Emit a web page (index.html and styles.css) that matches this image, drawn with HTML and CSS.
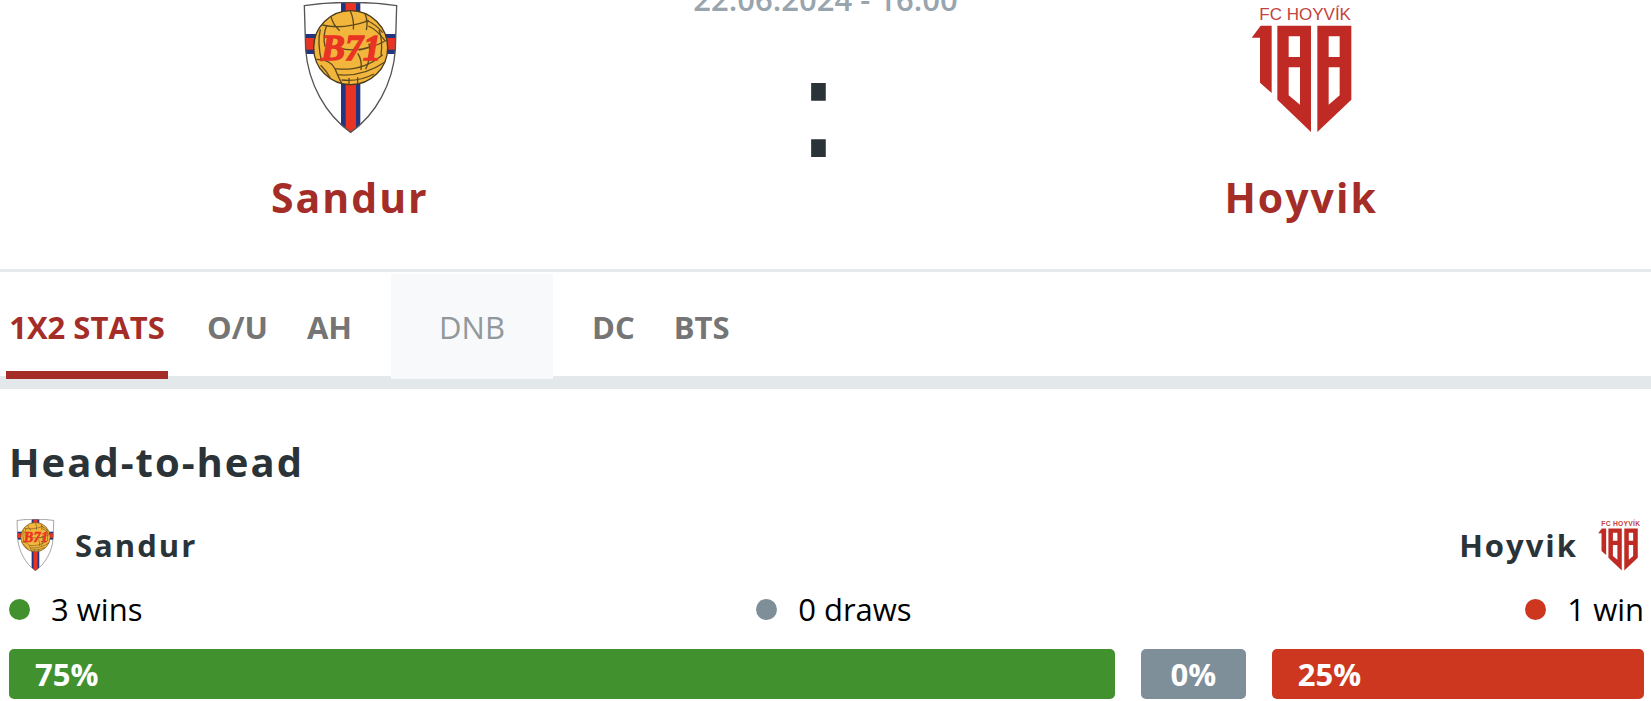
FILE: index.html
```html
<!DOCTYPE html>
<html lang="en">

<head>
  <title>Sandur - Hoyvik</title>
  <meta charset="UTF-8">
  <meta name="viewport" content="width=device-width, initial-scale=1.0">
  <link rel="stylesheet" href="styles.css">
</head>

<body>
  <svg class="sprite" aria-hidden="true">
    <symbol id="crest-sandur" viewBox="75 6 393 393">
      <clipPath id="shield">
        <path d="M136 17Q205 6 275 8Q345 6 413 17L409 150C402 250 350 345 275 397C200 345 148 250 140 150Z" />
      </clipPath>
      <g clip-path="url(#shield)">
        <rect x="130" y="0" width="290" height="400" fill="#fff" />
        <rect x="130" y="102" width="290" height="60" fill="#24357f" />
        <rect x="246" y="0" width="58" height="400" fill="#24357f" />
        <rect x="130" y="114" width="290" height="35" fill="#e93424" />
        <rect x="260" y="0" width="31" height="400" fill="#e93424" />
      </g>
      <path class="crest-edge" d="M136 17Q205 6 275 8Q345 6 413 17L409 150C402 250 350 345 275 397C200 345 148 250 140 150Z" />
      <circle cx="275" cy="143" r="111" fill="#f2b63c" stroke="#4a3a1c" stroke-width="4" />
      <g class="crest-seam">
        <path d="M216 50Q222 75 242 92M274 33Q286 60 283 88M318 42Q328 64 322 90M190 75Q250 90 330 62" />
        <path d="M320 60Q350 72 371 98M328 78Q352 88 378 122M184 88Q174 130 188 184M204 75Q190 105 198 140" />
        <path d="M172 178Q215 178 228 206Q235 225 248 250M185 196Q205 215 215 236M228 206Q310 216 371 164M235 224Q310 232 378 186M248 240Q300 246 345 222M270 234V254M296 232V252" />
        <path d="M300 150Q345 142 384 120M360 90Q372 120 366 165M240 142Q280 160 346 136M330 130Q338 170 320 208M296 160Q310 180 306 210" />
      </g>
      <text class="crest-b71" x="186" y="180">B71</text>
    </symbol>
    <symbol id="crest-hoyvik" viewBox="110 6 393 393">
      <text class="crest-fc" x="180" y="59">FC HOYVÍK</text>
      <g fill="#c02a24">
        <path d="M184 77H217V279L182 248V113H157Z" />
        <path fill-rule="evenodd" d="M234 77H335V396L234 299ZM268 109V171H302V109ZM268 202V286L302 314V202Z" />
        <path fill-rule="evenodd" d="M354 77H456V299L354 396ZM388 109V171H421V109ZM388 202V314L421 286V202Z" />
      </g>
    </symbol>
  </svg>

  <header class="match">
    <div class="team">
      <svg class="team-crest" role="img" aria-label="Sandur"><use href="#crest-sandur" /></svg>
      <a href="#" class="team-name">Sandur</a>
    </div>
    <div class="info">
      <time class="date" datetime="2024-06-22T16:00">22.06.2024 - 16:00</time>
      <span class="score">:</span>
    </div>
    <div class="team">
      <svg class="team-crest" role="img" aria-label="Hoyvik"><use href="#crest-hoyvik" /></svg>
      <a href="#" class="team-name">Hoyvik</a>
    </div>
  </header>

  <nav class="tabs">
    <button type="button" class="tab active">1X2 STATS</button>
    <button type="button" class="tab">O/U</button>
    <button type="button" class="tab">AH</button>
    <button type="button" class="tab" disabled>DNB</button>
    <button type="button" class="tab">DC</button>
    <button type="button" class="tab">BTS</button>
  </nav>

  <main class="h2h">
    <h2>Head-to-head</h2>
    <div class="sides">
      <div class="side">
        <svg class="side-crest" aria-hidden="true"><use href="#crest-sandur" /></svg>
        <span>Sandur</span>
      </div>
      <div class="side">
        <span>Hoyvik</span>
        <svg class="side-crest" aria-hidden="true"><use href="#crest-hoyvik" /></svg>
      </div>
    </div>
    <ul class="legend">
      <li class="home">3 wins</li>
      <li class="draw">0 draws</li>
      <li class="away">1 win</li>
    </ul>
    <div class="bars">
      <div class="bar home" style="width: 75%">75%</div>
      <div class="bar draw" style="width: 0%">0%</div>
      <div class="bar away" style="width: 25%">25%</div>
    </div>
  </main>
</body>

</html>
```
FILE: styles.css
```css
* {
  box-sizing: border-box;
}

body {
  margin: 0;
  background-color: #fff;
  color: #2a3338;
  font-family: "Open Sans", "Noto Sans", sans-serif;
  font-size: 31px;
}

.sprite {
  position: absolute;
  width: 0;
  height: 0;
}

.crest-edge {
  fill: none;
  stroke: #555;
  stroke-width: 4;
}

.crest-seam {
  fill: none;
  stroke: #5f4a1e;
  stroke-width: 4;
}

.crest-b71 {
  font-family: "Liberation Serif", serif;
  font-size: 108px;
  font-style: italic;
  font-weight: bold;
  fill: #e93424;
  stroke: #e93424;
  stroke-width: 4;
}

.crest-fc {
  font-family: "Liberation Sans", sans-serif;
  font-size: 51px;
  fill: #c4423d;
}

/* match header */

.match {
  display: grid;
  grid-template-columns: repeat(3, 1fr);
  align-items: start;
  padding: 0 112px 44px;
  border-bottom: 3px solid #e5eaed;
}

.team {
  display: flex;
  flex-direction: column;
  align-items: center;
  gap: 36px;
  padding-top: 2px;
}

.team-crest {
  width: 131px;
  height: 131px;
}

.team-name {
  color: #a52d28;
  font-size: 41px;
  font-weight: 700;
  line-height: 56px;
  letter-spacing: 2px;
  text-decoration: none;
}

.info {
  display: flex;
  flex-direction: column;
  align-items: center;
  margin-top: -21px;
}

.date {
  color: #98a5ae;
  font-weight: 600;
  line-height: 40px;
}

.score {
  margin-right: 14px;
  font-family: "DejaVu Sans", sans-serif;
  font-size: 142px;
  line-height: 178px;
}

/* tabs */

.tabs {
  display: flex;
  gap: 39px;
  height: 117px;
  padding: 2px 6px 0;
  border-bottom: 13px solid #e3e8ea;
}

.tab {
  margin: 0 0 -3px;
  padding: 8px 0 0;
  border: 0;
  border-bottom: 8px solid transparent;
  background: none;
  color: #757575;
  font: inherit;
  font-weight: 700;
  cursor: pointer;
}

.tab.active {
  min-width: 162px;
  border-bottom-color: #a52d28;
  color: #a52d28;
}

.tab:disabled {
  min-width: 162px;
  background-color: #f7f9fb;
  color: #92979b;
  font-weight: 500;
  cursor: default;
}

/* head to head */

.h2h {
  padding: 46px 7px 0 9px;
}

h2 {
  margin: 0 0 29px;
  font-size: 40px;
  font-weight: 700;
  line-height: 54px;
  letter-spacing: 2px;
}

.sides,
.legend,
.bars {
  display: flex;
  justify-content: space-between;
}

.side {
  display: flex;
  align-items: center;
  gap: 14px;
  font-weight: 700;
  line-height: 54px;
  letter-spacing: 2px;
}

.side-crest {
  width: 52px;
  height: 52px;
}

.legend {
  margin: 15px 0 18px;
  padding: 0;
  list-style: none;
  color: #000;
  line-height: 44px;
}

.legend li {
  display: flex;
  align-items: center;
  gap: 21px;
}

.legend li::before {
  content: "";
  width: 21px;
  height: 21px;
  border-radius: 50%;
  background-color: #41922f;
}

.legend li.draw::before {
  background-color: #7e8f9a;
}

.legend li.away::before {
  background-color: #cd371f;
}

.bars {
  gap: 26px;
}

.bar {
  padding: 0 26px;
  border-radius: 5px;
  color: #fff;
  font-weight: 700;
  line-height: 50px;
}

.bar.home {
  background-color: #41922f;
}

.bar.draw {
  flex-shrink: 0;
  min-width: 105px;
  background-color: #7e8f9a;
  text-align: center;
}

.bar.away {
  background-color: #cd371f;
}
```
